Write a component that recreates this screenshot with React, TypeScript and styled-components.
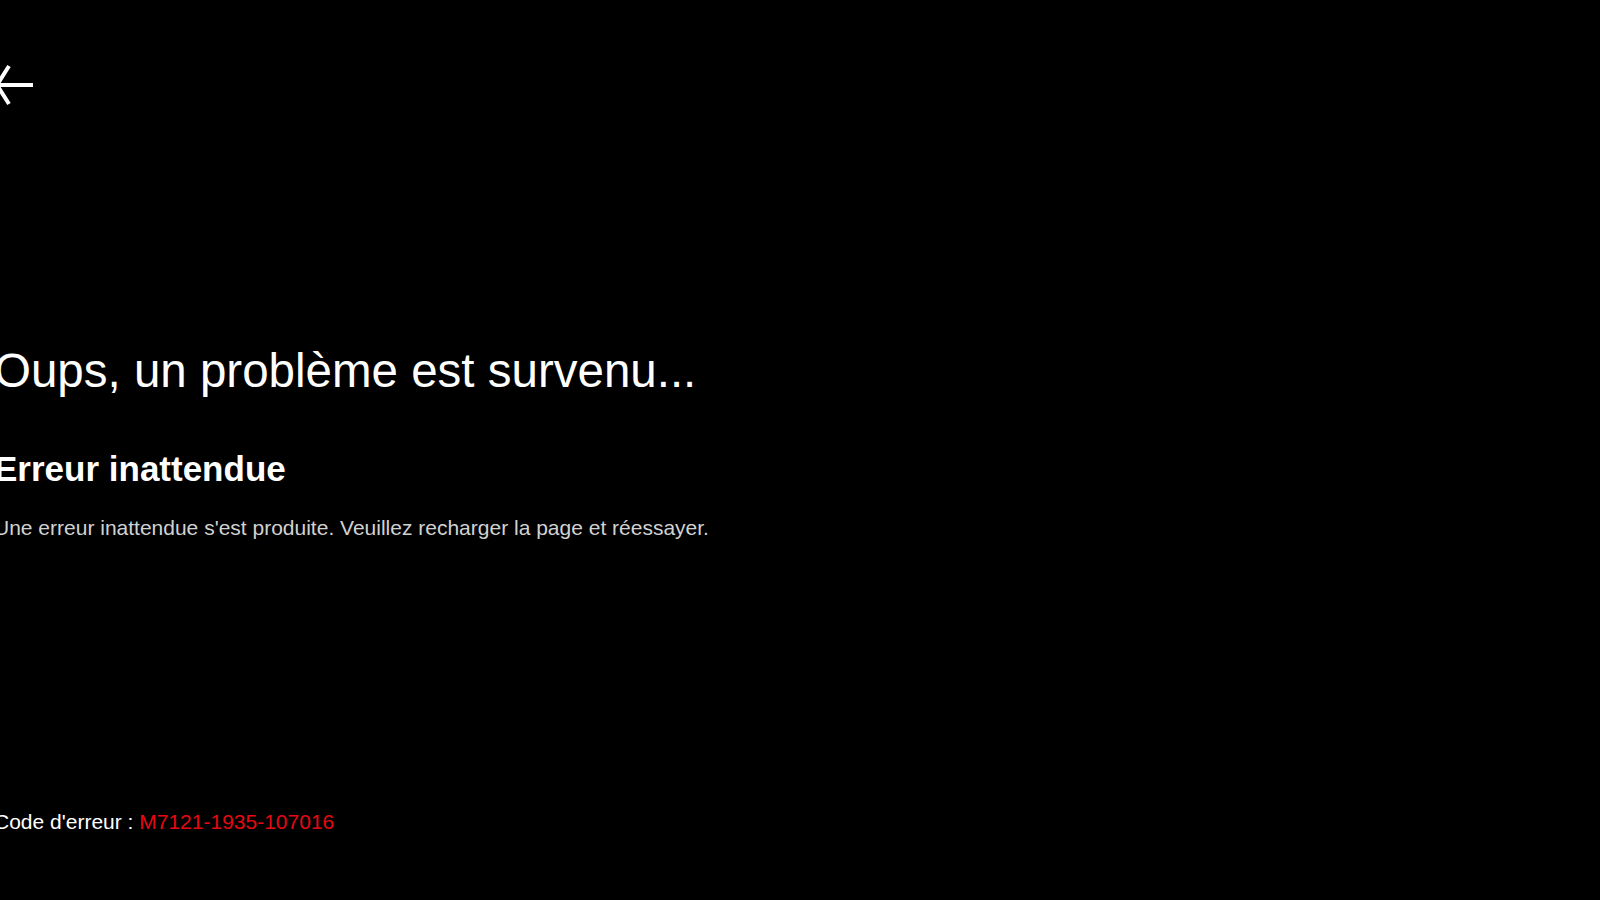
import React from "react";
import styled, { createGlobalStyle } from "styled-components";

const Global = createGlobalStyle`
  html, body {
    margin: 0;
    padding: 0;
    background: #000;
    overflow: hidden;
  }
  body {
    font-family: "Liberation Sans", Arial, Helvetica, sans-serif;
    color: #fff;
  }
`;

const Page = styled.div`
  height: 100vh;
  display: flex;
  flex-direction: column;
  background: #000;
  margin-left: -6px;
`;

const Header = styled.header`
  padding-top: 63px;
  display: flex;
`;

const BackButton = styled.button`
  background: none;
  border: none;
  padding: 0;
  margin-left: -2px;
  width: 44px;
  height: 44px;
  cursor: pointer;
  display: block;
  color: #fff;
`;

const Main = styled.main`
  margin-top: 236px;
  display: flex;
  flex-direction: column;
`;

const Title = styled.h1`
  margin: 0;
  font-size: 47.5px;
  line-height: 56px;
  font-weight: 400;
  color: #fff;
`;

const Subtitle = styled.h2`
  margin: 50px 0 0;
  font-size: 35px;
  line-height: 40px;
  font-weight: 700;
  color: #fff;
`;

const Message = styled.p`
  margin: 27px 0 0;
  font-size: 21px;
  line-height: 24px;
  color: #d2d2d2;
`;

const Footer = styled.footer`
  margin-top: auto;
  padding-bottom: 66px;
  font-size: 21px;
  line-height: 24px;
  color: #fff;
`;

const Code = styled.span`
  color: #e50914;
`;

export default function App() {
  return (
    <>
      <Global />
      <Page>
        <Header>
          <BackButton aria-label="Retour">
            <svg width="44" height="44" viewBox="0 0 44 44" fill="none">
              <path d="M5 22 H41" stroke="#fff" strokeWidth="4" />
              <path d="M17 3 L5 22 L17 41" stroke="#fff" strokeWidth="4" />
            </svg>
          </BackButton>
        </Header>
        <Main>
          <Title>Oups, un problème est survenu...</Title>
          <Subtitle>Erreur inattendue</Subtitle>
          <Message>
            Une erreur inattendue s'est produite. Veuillez recharger la page et réessayer.
          </Message>
        </Main>
        <Footer>
          Code d'erreur : <Code>M7121-1935-107016</Code>
        </Footer>
      </Page>
    </>
  );
}
